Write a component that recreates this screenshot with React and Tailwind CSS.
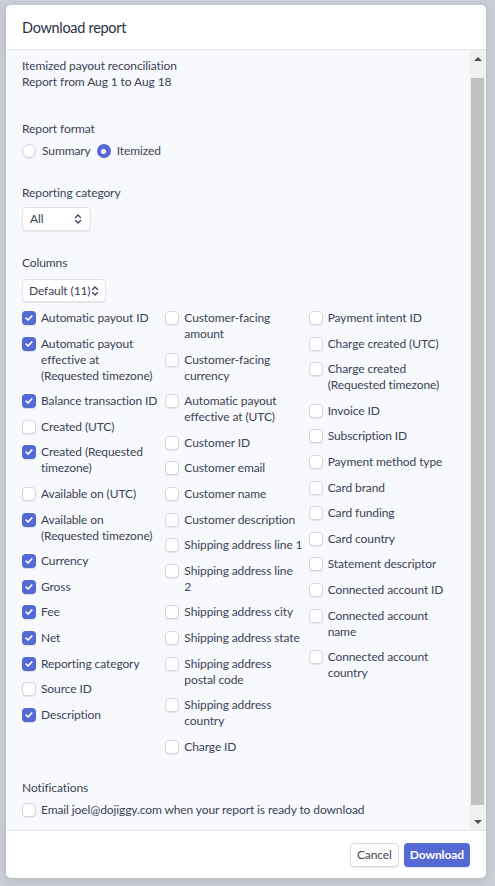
const col1 = [
  { lines: ["Automatic payout ID"], on: true },
  { lines: ["Automatic payout", "effective at", "(Requested timezone)"], on: true },
  { lines: ["Balance transaction ID"], on: true },
  { lines: ["Created (UTC)"], on: false },
  { lines: ["Created (Requested", "timezone)"], on: true },
  { lines: ["Available on (UTC)"], on: false },
  { lines: ["Available on", "(Requested timezone)"], on: true },
  { lines: ["Currency"], on: true },
  { lines: ["Gross"], on: true },
  { lines: ["Fee"], on: true },
  { lines: ["Net"], on: true },
  { lines: ["Reporting category"], on: true },
  { lines: ["Source ID"], on: false },
  { lines: ["Description"], on: true },
]

const col2 = [
  { lines: ["Customer-facing", "amount"] },
  { lines: ["Customer-facing", "currency"] },
  { lines: ["Automatic payout", "effective at (UTC)"] },
  { lines: ["Customer ID"] },
  { lines: ["Customer email"] },
  { lines: ["Customer name"] },
  { lines: ["Customer description"] },
  { lines: ["Shipping address line 1"] },
  { lines: ["Shipping address line", "2"] },
  { lines: ["Shipping address city"] },
  { lines: ["Shipping address state"] },
  { lines: ["Shipping address", "postal code"] },
  { lines: ["Shipping address", "country"] },
  { lines: ["Charge ID"] },
]

const col3 = [
  { lines: ["Payment intent ID"] },
  { lines: ["Charge created (UTC)"] },
  { lines: ["Charge created", "(Requested timezone)"] },
  { lines: ["Invoice ID"] },
  { lines: ["Subscription ID"] },
  { lines: ["Payment method type"] },
  { lines: ["Card brand"] },
  { lines: ["Card funding"] },
  { lines: ["Card country"] },
  { lines: ["Statement descriptor"] },
  { lines: ["Connected account ID"] },
  { lines: ["Connected account", "name"] },
  { lines: ["Connected account", "country"] },
]

function Checkbox({ on }) {
  if (on) {
    return (
      <span className="mt-[1px] flex h-[14px] w-[14px] shrink-0 items-center justify-center rounded-[4px] bg-[#5469d4] shadow-[0_1px_1px_rgba(0,0,0,0.12)]">
        <svg width="10" height="10" viewBox="0 0 10 10" fill="none">
          <path d="M2.2 5.2 L4.1 7 L7.8 3" stroke="white" strokeWidth="1.7" strokeLinecap="round" strokeLinejoin="round" />
        </svg>
      </span>
    )
  }
  return (
    <span className="mt-[1px] h-[14px] w-[14px] shrink-0 rounded-[4px] border border-[#d3d8df] bg-white shadow-[0_1px_1px_rgba(0,0,0,0.08)]" />
  )
}

function Item({ lines, on }) {
  return (
    <div className="flex items-start gap-[5px]">
      <Checkbox on={on} />
      <div className="whitespace-nowrap">
        {lines.map((l) => (
          <div key={l}>{l}</div>
        ))}
      </div>
    </div>
  )
}

function Chevrons() {
  return (
    <svg width="8" height="12" viewBox="0 0 8 12" fill="none">
      <path d="M1.5 4.5 L4 2 L6.5 4.5 M1.5 7.5 L4 10 L6.5 7.5" stroke="#3c4257" strokeWidth="1.3" strokeLinecap="round" strokeLinejoin="round" />
    </svg>
  )
}

function App() {
  return (
    <div
      className="h-[886px] w-[495px] overflow-hidden bg-[#cacfd7] pl-[6px] pt-[5px] text-[12px] leading-[16px] tracking-[-0.1px] text-[#3c4257]"
      style={{ fontFamily: 'Lato, "Noto Sans", sans-serif' }}
    >
      <div className="flex h-[873px] w-[480px] flex-col overflow-hidden rounded-[5px] bg-white shadow-[0_2px_8px_rgba(0,0,0,0.12)]">
        <div className="flex h-[45px] shrink-0 items-center border-b border-[#e3e8ee] px-[16px] pt-[1px] text-[14.5px] tracking-[-0.3px] text-[#2a2f45]">
          Download report
        </div>

        <div className="flex flex-1 bg-[#f7f9fc]">
          <div className="flex-1 pl-[16px] pt-[8px]">
            <div>Itemized payout reconciliation</div>
            <div>Report from Aug 1 to Aug 18</div>

            <div className="mt-[31px]">Report format</div>
            <div className="mt-[6px] flex items-center gap-[6px]">
              <span className="h-[14px] w-[14px] rounded-full border border-[#d3d8df] bg-white shadow-[0_1px_1px_rgba(0,0,0,0.08)]" />
              <span>Summary</span>
              <span className="flex h-[14px] w-[14px] items-center justify-center rounded-full bg-[#5469d4]">
                <span className="h-[5px] w-[5px] rounded-full bg-white" />
              </span>
              <span>Itemized</span>
            </div>

            <div className="mt-[26px]">Reporting category</div>
            <div className="mt-[6px] flex h-[24px] w-[69px] items-center justify-between rounded-[4px] border border-[#e0e5eb] bg-white pl-[7px] pr-[8px] shadow-[0_1px_1px_rgba(0,0,0,0.08)]">
              <span>All</span>
              <Chevrons />
            </div>

            <div className="mt-[24px]">Columns</div>
            <div className="mt-[8px] flex h-[23px] w-[84px] items-center justify-between whitespace-nowrap rounded-[4px] border border-[#e0e5eb] bg-white pl-[6px] pr-[6px] shadow-[0_1px_1px_rgba(0,0,0,0.08)]">
              <span>Default (11)</span>
              <Chevrons />
            </div>

            <div className="mt-[8px] grid w-[430px] grid-cols-3">
              {[col1, col2, col3].map((col, i) => (
                <div key={i} className="flex flex-col gap-[9.6px]">
                  {col.map((it) => (
                    <Item key={it.lines.join(" ")} lines={it.lines} on={it.on} />
                  ))}
                </div>
              ))}
            </div>

            <div className="mt-[25px]">Notifications</div>
            <div className="mt-[6px]">
              <Item lines={["Email joel@dojiggy.com when your report is ready to download"]} on={false} />
            </div>
          </div>

          <div className="flex w-[17px] shrink-0 flex-col bg-[#f1f1f1]">
            <div className="flex h-[17px] items-center justify-center">
              <span className="h-0 w-0 border-x-[4px] border-b-[4px] border-x-transparent border-b-[#505050]" />
            </div>
            <div className="mx-[2px] mb-[8px] mt-[11px] flex-1 bg-[#c1c1c1]" />
            <div className="flex h-[17px] items-center justify-center">
              <span className="h-0 w-0 border-x-[4px] border-t-[4px] border-x-transparent border-t-[#505050]" />
            </div>
          </div>
        </div>

        <div className="flex h-[48px] shrink-0 items-center justify-end gap-[5px] border-t border-[#e3e8ee] pr-[16px]">
          <button className="h-[24px] rounded-[4px] border border-[#d5dbe1] bg-white px-[6px] text-[12px] text-[#3c4257] shadow-[0_1px_1px_rgba(0,0,0,0.08)]">
            Cancel
          </button>
          <button className="h-[24px] rounded-[4px] bg-[#5469d4] px-[6px] text-[12px] font-bold text-white shadow-[0_1px_1px_rgba(0,0,0,0.12)]">
            Download
          </button>
        </div>
      </div>
    </div>
  )
}

export default App
